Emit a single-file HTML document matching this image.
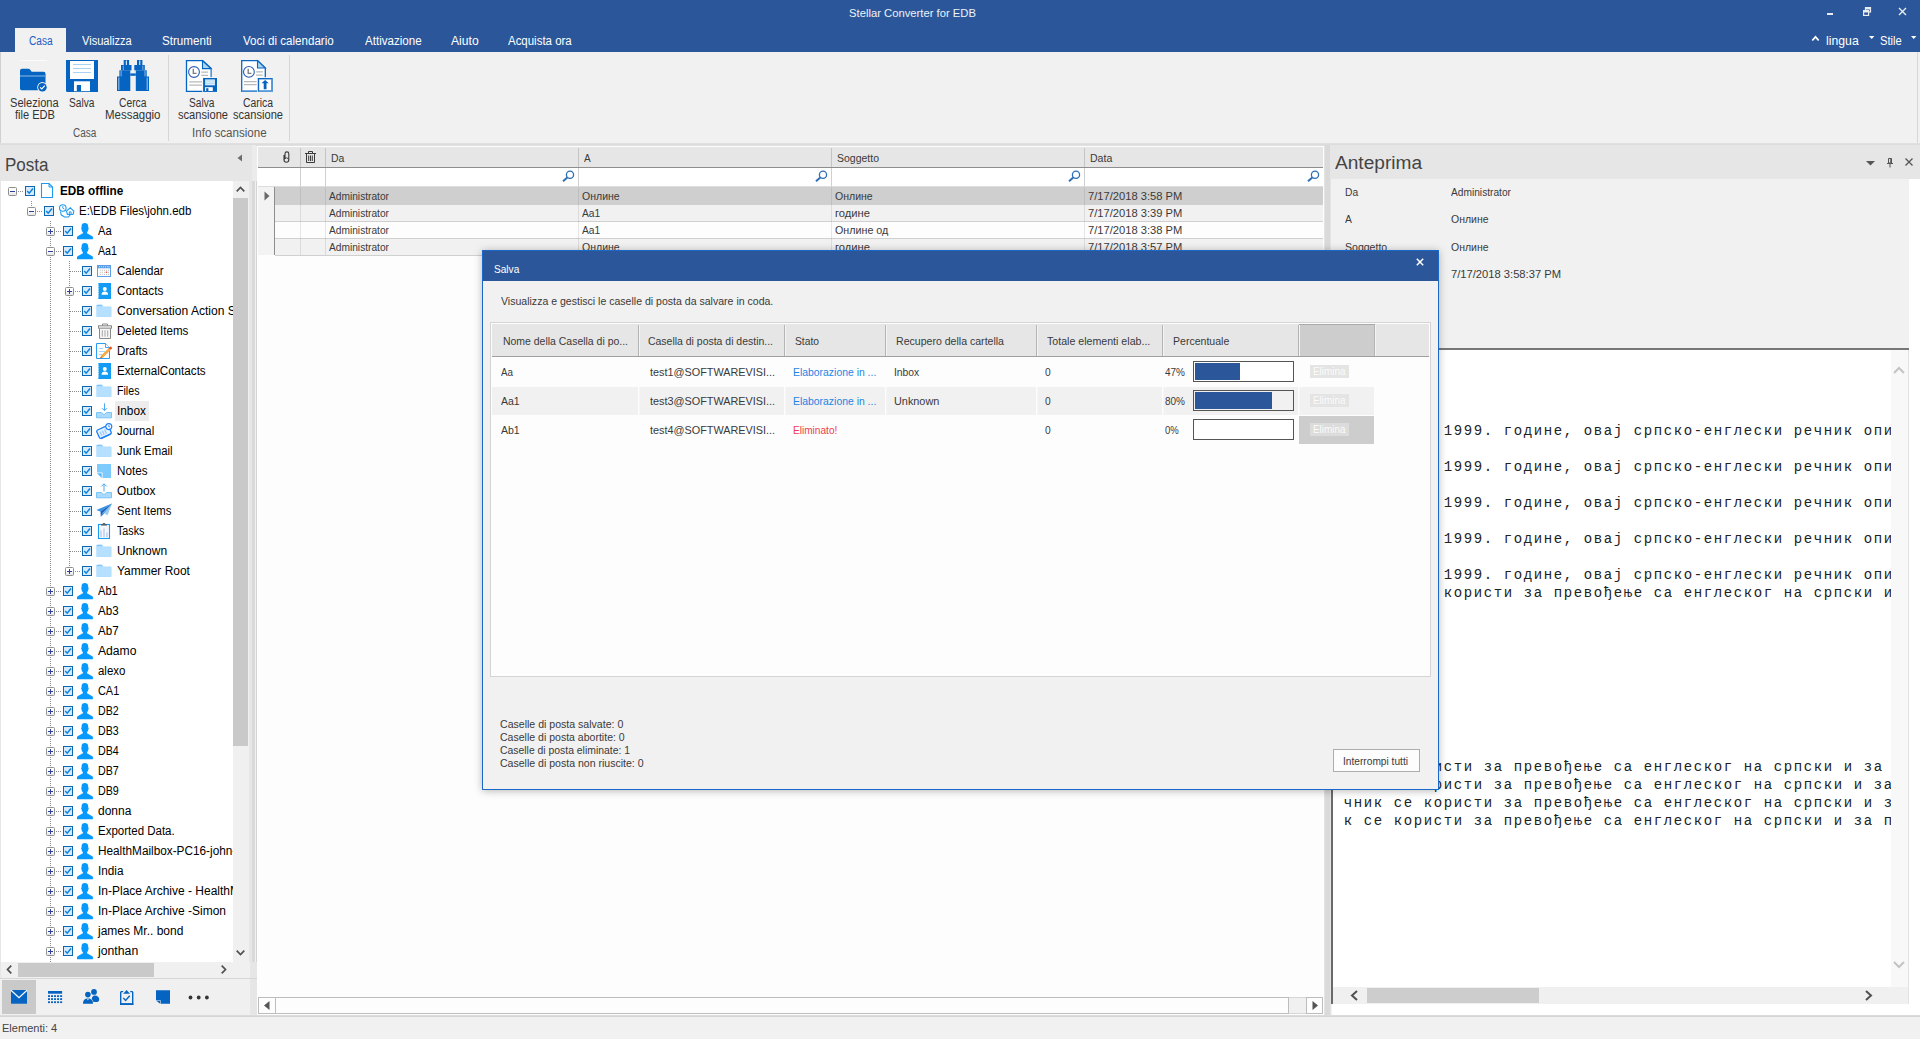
<!DOCTYPE html>
<html lang="it">
<head>
<meta charset="utf-8">
<title>Stellar Converter for EDB</title>
<style>
*{box-sizing:border-box;margin:0;padding:0}
html,body{width:1920px;height:1039px;overflow:hidden}
body{position:relative;background:#f1f1f1;font-family:"Liberation Sans",sans-serif;font-size:12px;color:#222;}
.a{position:absolute}
.t{position:absolute;white-space:nowrap;line-height:1}
.ui{font-family:"Liberation Sans","DejaVu Sans",sans-serif}
svg{position:absolute;overflow:visible}
/* title */
#title{left:0;top:0;width:1920px;height:52px;background:#2b579a}
.tab{color:#fff;font-size:12px;top:34.500px}
/* ribbon */
.rl{font-size:12px;color:#333;text-align:center;line-height:13px;white-space:nowrap}
.rg{font-size:12px;color:#555}
/* tree */
.tr{font-size:12px;color:#000}
.cb{position:absolute;width:10px;height:10px;border:1px solid #0c66b4;background:#d6ecfc}
.ex{position:absolute;width:9px;height:9px;border:1px solid #8f8f8f;border-radius:1.500px;background:linear-gradient(#fff 40%,#e4e4e4)}
.ex:before{content:"";position:absolute;left:1px;top:3px;width:5px;height:1px;background:#2b3f9c}
.ex.p:after{content:"";position:absolute;left:3px;top:1px;width:1px;height:5px;background:#2b3f9c}
.dh{position:absolute;height:1px;background-image:linear-gradient(90deg,#8c8c8c 50%,transparent 50%);background-size:2px 1px}
.dv{position:absolute;width:1px;background-image:linear-gradient(180deg,#8c8c8c 50%,transparent 50%);background-size:1px 2px}
/* grid */
.g{font-size:11px;color:#3a3a3a;transform-origin:0 0}
.d{font-size:11px;color:#3a3a3a;transform-origin:0 0}
.mono{font-family:"Liberation Mono",monospace;font-size:14px;letter-spacing:1.600px;color:#222;transform-origin:0 0}
</style>
</head>
<body>
<!-- TITLE BAR -->
<div id="title" class="a"></div>
<div class="t ui" style="transform-origin:0 0;transform:scaleX(0.9788);left:848.800px;top:8px;font-size:11.500px;color:#eef2f7" id="ttl">Stellar Converter for EDB</div>
<div class="a" style="left:15px;top:28px;width:51px;height:24px;background:#f1f1f1"></div>
<div class="t tab" style="transform-origin:0 0;transform:scaleX(0.8460);left:29px;color:#2160c4" id="tab0">Casa</div>
<div class="t tab" style="transform-origin:0 0;transform:scaleX(0.9236);left:82px" id="tab1">Visualizza</div>
<div class="t tab" style="transform-origin:0 0;transform:scaleX(0.9677);left:162px" id="tab2">Strumenti</div>
<div class="t tab" style="transform-origin:0 0;transform:scaleX(0.9643);left:243px" id="tab3">Voci di calendario</div>
<div class="t tab" style="transform-origin:0 0;transform:scaleX(0.9659);left:365px" id="tab4">Attivazione</div>
<div class="t tab" style="transform-origin:0 0;transform:scaleX(1.0125);left:451px" id="tab5">Aiuto</div>
<div class="t tab" style="transform-origin:0 0;transform:scaleX(0.9550);left:508px" id="tab6">Acquista ora</div>
<div class="t tab" style="transform-origin:0 0;transform:scaleX(1.0209);left:1826px" id="tab7">lingua</div>
<div class="t tab" style="transform-origin:0 0;transform:scaleX(0.9296);left:1880px" id="tab8">Stile</div>
<svg style="left:0;top:0" width="1920" height="52" viewBox="0 0 1920 52">
 <rect x="1827" y="13" width="6" height="2" fill="#e8ecf3"/>
 <g fill="none" stroke="#e8ecf3" stroke-width="1.2">
  <rect x="1865.5" y="7.6" width="5" height="4.4"/>
  <rect x="1863.6" y="10.6" width="5" height="4.8" fill="#2b579a"/>
  <path d="M1865.5 8.6h5M1863.6 11.6h5" stroke-width="1.6"/>
 </g>
 <path d="M1899 8l7 7M1906 8l-7 7" stroke="#e8ecf3" stroke-width="1.4" fill="none"/>
 <path d="M1812.3 40.5l3.2-3.6 3.2 3.6" stroke="#fff" stroke-width="1.8" fill="none"/>
 <path d="M1869 36h5.4l-2.7 3z" fill="#fff"/>
 <path d="M1911 36h5.4l-2.7 3z" fill="#fff"/>
</svg>
<!-- RIBBON -->
<div class="a" style="left:0;top:52px;width:1920px;height:92px;background:#f1f1f1"></div>
<div class="a" style="left:0;top:52px;width:1px;height:92px;background:#d0d0d0"></div>
<div class="a" style="left:1917px;top:52px;width:1px;height:92px;background:#d8d8d8"></div>
<div class="a" style="left:0;top:143px;width:1920px;height:2px;background:linear-gradient(#e2e2e2,#dadada)"></div>
<div class="a" style="left:168px;top:55px;width:1px;height:86px;background:#d6d6d6"></div>
<div class="a" style="left:289px;top:55px;width:1px;height:86px;background:#d6d6d6"></div>
<div class="t rl" id="rl0a" style="transform-origin:0 0;transform:scaleX(0.9238);left:10.0px;top:96.7px">Seleziona</div>
<div class="t rl" id="rl0b" style="transform-origin:0 0;transform:scaleX(0.9225);left:14.7px;top:109.2px">file EDB</div>
<div class="t rl" id="rl1a" style="transform-origin:0 0;transform:scaleX(0.8491);left:69.0px;top:96.7px">Salva</div>
<div class="t rl" id="rl2a" style="transform-origin:0 0;transform:scaleX(0.8590);left:119.0px;top:96.7px">Cerca</div>
<div class="t rl" id="rl2b" style="transform-origin:0 0;transform:scaleX(0.9564);left:105.0px;top:109.2px">Messaggio</div>
<div class="t rl" id="rl3a" style="transform-origin:0 0;transform:scaleX(0.8491);left:189.0px;top:96.7px">Salva</div>
<div class="t rl" id="rl3b" style="transform-origin:0 0;transform:scaleX(0.9251);left:177.5px;top:109.2px">scansione</div>
<div class="t rl" id="rl4a" style="transform-origin:0 0;transform:scaleX(0.8649);left:242.5px;top:96.7px">Carica</div>
<div class="t rl" id="rl4b" style="transform-origin:0 0;transform:scaleX(0.9251);left:232.5px;top:109.2px">scansione</div>
<div class="t rg" id="rg0" style="transform-origin:0 0;transform:scaleX(0.8317);left:73px;top:127.2px">Casa</div>
<div class="t rg" id="rg1" style="transform-origin:0 0;transform:scaleX(0.9652);left:192px;top:127.2px">Info scansione</div>
<!-- ribbon icons -->
<div class="a" style="left:20px;top:60px;width:27px;height:1px;background:#fafafa"></div>
<svg style="left:18px;top:60px" width="32" height="32" viewBox="0 0 32 32">
 <path d="M2 10.700q0-2 2-2h6.300q1.200 0 1.900 1l1.500 2.100H25.500q2 0 2 2V28.600q0 1.600-1.600 1.600H3.600Q2 30.200 2 28.600z" fill="#0563c1"/>
 <rect x="2" y="15.200" width="25.500" height="1.600" fill="#5b9bd9"/>
 <circle cx="24.400" cy="27.200" r="5.200" fill="#f1f1f1"/>
 <circle cx="24.400" cy="27.200" r="4.300" fill="#0563c1"/>
 <path d="M22.100 27.300l1.700 1.700 3-3.300" stroke="#fff" stroke-width="1.200" fill="none"/>
</svg>
<svg style="left:66px;top:60px" width="32" height="32" viewBox="0 0 32 32">
 <path d="M0 0h32v32H1.500Q0 32 0 30.500z" fill="#0563c1"/>
 <rect x="4" y="1" width="24" height="18" fill="#fff"/>
 <path d="M7 4.500h18M7 8.500h18M7 12.500h18" stroke="#a9d3f0" stroke-width="1"/>
 <rect x="8" y="21.300" width="16" height="9.900" fill="#fff"/>
 <rect x="10.800" y="25" width="4.200" height="6.200" fill="#0563c1"/>
</svg>
<svg style="left:117px;top:60px" width="32" height="32" viewBox="0 0 32 32" id="bino">
 <g fill="#0563c1">
  <rect x="6.700" y="0" width="5.400" height="5.500"/><rect x="20" y="0" width="5.400" height="5.500"/>
  <rect x="4" y="5" width="10.500" height="5.300"/><rect x="17.300" y="5" width="10.500" height="5.300"/>
  <path d="M2.400 10.200h10.900v20.800H0V16.400h2.400z"/>
  <path d="M18.800 10.200h10.900v6.200H32v14.600H18.800z"/>
  <rect x="13.300" y="13.400" width="5.500" height="2.400"/>
 </g>
 <g fill="#cfe2f5">
  <rect x="8.800" y="0.500" width="1.200" height="4.500"/><rect x="22.100" y="0.500" width="1.200" height="4.500"/>
 </g>
 <g fill="#8db9e6">
  <rect x="3.600" y="10.400" width="1" height="6"/><rect x="27.500" y="10.400" width="1" height="6"/>
  <rect x="1.200" y="17.500" width="1.200" height="12.500"/><rect x="29.600" y="17.500" width="1.200" height="12.500"/>
  <rect x="5.800" y="5.600" width=".9" height="4.400"/><rect x="25.400" y="5.600" width=".9" height="4.400"/>
 </g>
</svg>
<svg style="left:185px;top:60px" width="33" height="32" viewBox="0 0 33 32" id="savescan">
 <path d="M1.500 0.600h16.200l8.600 8v22.700H1.500z" fill="#fff" stroke="#0563c1" stroke-width="1.300"/>
 <path d="M17.500 0.800v7.800h8.500z" fill="#a9d6f3" stroke="#0563c1" stroke-width="1.100"/>
 <path d="M26.300 9v9" stroke="#5b9bd9" stroke-width="1.300"/>
 <circle cx="9" cy="12" r="5.400" fill="#fff" stroke="#2a5db0" stroke-width="1.100"/>
 <path d="M8.300 8.800v4.600h3.200" stroke="#7a7a7a" stroke-width="1.300" fill="none"/>
 <path d="M16.200 12.200h6.800M16.200 15.300h6.800M4.200 21.900h13M4.200 25.100h13" stroke="#b9b9b9" stroke-width="1.300"/>
 <rect x="17.300" y="17.200" width="15.700" height="14.800" fill="#f6f6f6"/>
 <rect x="18.100" y="18" width="13.900" height="13.900" fill="#0563c1"/>
 <rect x="20.100" y="19.400" width="9.900" height="5.900" fill="#dceefb"/>
 <path d="M20.100 21h9.900M20.100 23.300h9.900" stroke="#a9d3f0" stroke-width=".9"/>
 <rect x="20" y="27.200" width="7.800" height="3.800" fill="#fff"/>
 <rect x="21.200" y="28.200" width="2.200" height="2.800" fill="#0563c1"/>
</svg>
<svg style="left:240px;top:60px" width="34" height="32" viewBox="0 0 34 32" id="loadscan">
 <path d="M1.700 0.600h16l7.600 7.400v23.300H1.700z" fill="#fff" stroke="#0f67c3" stroke-width="1.300"/>
 <path d="M1.700 31h17" stroke="#5b9bd9" stroke-width="1.500"/>
 <path d="M17.500 0.800v7.200h7.800z" fill="#a9d6f3" stroke="#0f67c3" stroke-width="1.100"/>
 <circle cx="8.900" cy="11.900" r="5.400" fill="#fff" stroke="#2a5db0" stroke-width="1.100"/>
 <path d="M8.200 8.700v4.600h3.200" stroke="#7a7a7a" stroke-width="1.300" fill="none"/>
 <path d="M16.100 11.800h6.700M16.100 15.200h6.700M4 21.600h12.600M4 24.600h12.600" stroke="#b9b9b9" stroke-width="1.300"/>
 <rect x="17" y="17.200" width="16.500" height="14.800" fill="#f6f6f6"/>
 <rect x="18.500" y="18.700" width="13.600" height="12.500" fill="#fff" stroke="#0f67c3" stroke-width="1.400"/>
 <path d="M32.100 18.700v12.500H18.500" fill="none" stroke="#5b9bd9" stroke-width="1.400"/>
 <path d="M25.100 20l3.600 3.300h-2.200v6h-2.800v-6h-2.200z" fill="#0563c1"/>
</svg>
<!-- LEFT PANEL -->
<div class="a" style="left:0;top:145px;width:252px;height:871px;background:#e6e6e6"></div>
<div class="a" style="left:252px;top:145px;width:5px;height:36px;background:#ececec"></div>
<div class="a" style="left:252px;top:181px;width:3px;height:835px;background:#d9d9d9"></div>
<div class="a" style="left:256px;top:181px;width:1px;height:835px;background:#d4d4d4"></div>
<div class="t ui" style="transform-origin:0 0;transform:scaleX(0.9450);left:5px;top:156px;font-size:18px;color:#444;transform-origin:0 0" id="posta">Posta</div>
<svg style="left:237px;top:154px" width="6" height="8" viewBox="0 0 6 8"><path d="M5 0.500v7l-4.500-3.500z" fill="#6d6d6d"/></svg>
<div class="a" id="tree" style="left:1px;top:181px;width:232px;height:781px;background:#fff;overflow:hidden">
<div class="dv" style="left:30px;top:20px;height:8px"></div>
<div class="dv" style="left:49px;top:40px;height:741px"></div>
<div class="dv" style="left:68px;top:80px;height:308px"></div>
<div class="ex" style="left:7px;top:6px"></div>
<div class="dh" style="left:17px;top:10px;width:6px"></div>
<div class="cb" style="left:24px;top:5px"><svg style="left:0;top:0" width="8" height="8" viewBox="0 0 8 8"><path d="M1.200 4l2 2.200 3.800-4.600" fill="none" stroke="#1080dc" stroke-width="1.500"/></svg></div>
<svg style="left:38px;top:2px" width="16" height="16" viewBox="0 0 16 16"><path d="M2.500 0.500h7.500l3.500 3.500v10.500h-11z" fill="#fff" stroke="#1e9bf0" stroke-width="1.100"/><path d="M10 0.500v3.500h3.500" fill="none" stroke="#1e9bf0" stroke-width="1"/></svg>
<div class="t tr" id="tr0" style="transform-origin:0 0;transform:scaleX(0.9788);left:59px;top:4px;font-weight:bold;">EDB offline</div>
<div class="ex" style="left:26px;top:26px"></div>
<div class="dh" style="left:36px;top:30px;width:6px"></div>
<div class="cb" style="left:43px;top:25px"><svg style="left:0;top:0" width="8" height="8" viewBox="0 0 8 8"><path d="M1.200 4l2 2.200 3.800-4.600" fill="none" stroke="#1080dc" stroke-width="1.500"/></svg></div>
<svg style="left:57px;top:22px" width="16" height="16" viewBox="0 0 16 16"><g fill="none" stroke="#1e9bf0" stroke-width="1.100"><circle cx="4.800" cy="5" r="3.300"/><path d="M4.800 3v2.200l1.600.8" stroke-width=".9"/><path d="M2.500 8.500l.7 3.300 3.300 2.200h4l2-2.500"/><path d="M8.500 8.200l3.700-3.400 3.700 3.400-.9 3.300h-5.600z"/><path d="M11.300 11.500v-2.600h1.800v2.600" stroke-width="1"/></g></svg>
<div class="t tr" id="tr1" style="transform-origin:0 0;transform:scaleX(0.9565);left:78px;top:24px;">E:\EDB Files\john.edb</div>
<div class="ex p" style="left:45px;top:46px"></div>
<div class="dh" style="left:55px;top:50px;width:6px"></div>
<div class="cb" style="left:62px;top:45px"><svg style="left:0;top:0" width="8" height="8" viewBox="0 0 8 8"><path d="M1.200 4l2 2.200 3.800-4.600" fill="none" stroke="#1080dc" stroke-width="1.500"/></svg></div>
<svg style="left:76px;top:42px" width="16" height="17" viewBox="0 0 16 17"><path d="M7.700 0C9.600 0 11.200 1.200 11.200 3.200L11.200 4.600C11.800 4.800 11.900 5.600 11.400 6.200C11.200 7.400 10.600 8.600 10 9.300L10 10.200L15.300 13.300C15.800 13.600 15.900 14 15.900 14.500L15.900 16.300L0 16.300L0 14.500C0 14 .2 13.600 .6 13.300L5.900 10.200L5.900 9.300C5.200 8.600 4.700 7.400 4.500 6.200C4 5.600 4.100 4.800 4.600 4.600L4.600 3.200C4.600 1.200 5.800 0 7.700 0Z" fill="#0899fd"/></svg>
<div class="t tr" id="tr2" style="transform-origin:0 0;transform:scaleX(0.9328);left:97px;top:44px;">Aa</div>
<div class="ex" style="left:45px;top:66px"></div>
<div class="dh" style="left:55px;top:70px;width:6px"></div>
<div class="cb" style="left:62px;top:65px"><svg style="left:0;top:0" width="8" height="8" viewBox="0 0 8 8"><path d="M1.200 4l2 2.200 3.800-4.600" fill="none" stroke="#1080dc" stroke-width="1.500"/></svg></div>
<svg style="left:76px;top:62px" width="16" height="17" viewBox="0 0 16 17"><path d="M7.700 0C9.600 0 11.200 1.200 11.200 3.200L11.200 4.600C11.800 4.800 11.900 5.600 11.400 6.200C11.200 7.400 10.600 8.600 10 9.300L10 10.200L15.300 13.300C15.800 13.600 15.900 14 15.900 14.500L15.900 16.300L0 16.300L0 14.500C0 14 .2 13.600 .6 13.300L5.900 10.200L5.900 9.300C5.200 8.600 4.700 7.400 4.500 6.200C4 5.600 4.100 4.800 4.600 4.600L4.600 3.200C4.600 1.200 5.800 0 7.700 0Z" fill="#0899fd"/></svg>
<div class="t tr" id="tr3" style="transform-origin:0 0;transform:scaleX(0.8895);left:97px;top:64px;">Aa1</div>
<div class="dh" style="left:69px;top:90px;width:11px"></div>
<div class="cb" style="left:81px;top:85px"><svg style="left:0;top:0" width="8" height="8" viewBox="0 0 8 8"><path d="M1.200 4l2 2.200 3.800-4.600" fill="none" stroke="#1080dc" stroke-width="1.500"/></svg></div>
<svg style="left:95px;top:82px" width="16" height="16" viewBox="0 0 16 16"><rect x="1.500" y="2.500" width="13" height="11" fill="#fff" stroke="#5c9fe8" stroke-width="1"/><rect x="1" y="2" width="14" height="3.300" fill="#5c9fe8"/><path d="M3.500 3v1.300M5.500 3v1.300M7.500 3v1.300M9.500 3v1.300M11.500 3v1.300M13 3v1.300" stroke="#d4e6fa" stroke-width=".7"/><g fill="#b9b9b9"><rect x="3.8" y="6.7" width="1" height="1"/><rect x="5.8" y="6.7" width="1" height="1"/><rect x="7.9" y="6.7" width="1" height="1"/><rect x="9.9" y="6.7" width="1" height="1"/><rect x="12.0" y="6.7" width="1" height="1"/><rect x="3.8" y="8.8" width="1" height="1"/><rect x="5.8" y="8.8" width="1" height="1"/><rect x="7.9" y="8.8" width="1" height="1"/><rect x="12.0" y="8.8" width="1" height="1"/><rect x="3.8" y="10.9" width="1" height="1"/><rect x="5.8" y="10.9" width="1" height="1"/><rect x="7.9" y="10.9" width="1" height="1"/><rect x="9.9" y="10.9" width="1" height="1"/><rect x="12.0" y="10.9" width="1" height="1"/></g><rect x="9.800" y="8.600" width="1.300" height="1.300" fill="#f03030"/></svg>
<div class="t tr" id="tr4" style="transform-origin:0 0;transform:scaleX(0.9589);left:116px;top:84px;">Calendar</div>
<div class="ex p" style="left:64px;top:106px"></div>
<div class="dh" style="left:74px;top:110px;width:6px"></div>
<div class="cb" style="left:81px;top:105px"><svg style="left:0;top:0" width="8" height="8" viewBox="0 0 8 8"><path d="M1.200 4l2 2.200 3.800-4.600" fill="none" stroke="#1080dc" stroke-width="1.500"/></svg></div>
<svg style="left:95px;top:102px" width="16" height="16" viewBox="0 0 16 16"><rect x="2.300" y="0" width="12.700" height="16" fill="#149cf5"/><path d="M2.300 1.500v13" stroke="#fff" stroke-width=".9" stroke-dasharray="0.800 0.900"/><circle cx="8.800" cy="5.900" r="2" fill="#fff"/><path d="M5.500 11.800c0-2.300 1.400-3.300 3.300-3.300s3.300 1 3.300 3.300z" fill="#fff"/></svg>
<div class="t tr" id="tr5" style="transform-origin:0 0;transform:scaleX(0.9776);left:116px;top:104px;">Contacts</div>
<div class="dh" style="left:69px;top:130px;width:11px"></div>
<div class="cb" style="left:81px;top:125px"><svg style="left:0;top:0" width="8" height="8" viewBox="0 0 8 8"><path d="M1.200 4l2 2.200 3.800-4.600" fill="none" stroke="#1080dc" stroke-width="1.500"/></svg></div>
<svg style="left:95px;top:122px" width="16" height="16" viewBox="0 0 16 16"><path d="M0.300 2.900q0-.9.900-.9h4.600q.6 0 .9.500l.7 1.100h7.300q.7 0 .7.700v9q0 .7-.7.700H1q-.7 0-.7-.7z" fill="#aedcff"/><path d="M.5 2.500q0-.7.800-.7h4.400q.6 0 .9.700z" fill="#4db1fb"/><path d="M1 4.300h14.200v9.200H1z" fill="#b6e0ff"/></svg>
<div class="t tr" id="tr6" style="transform-origin:0 0;transform:scaleX(1.0070);left:116px;top:124px;">Conversation Action Settings</div>
<div class="dh" style="left:69px;top:150px;width:11px"></div>
<div class="cb" style="left:81px;top:145px"><svg style="left:0;top:0" width="8" height="8" viewBox="0 0 8 8"><path d="M1.200 4l2 2.200 3.800-4.600" fill="none" stroke="#1080dc" stroke-width="1.500"/></svg></div>
<svg style="left:95px;top:142px" width="16" height="16" viewBox="0 0 16 16"><g fill="none" stroke="#8a8a8a" stroke-width="1"><path d="M3.500 5.300v10.200h11V5.300" fill="#f6f6f6"/><rect x="2.500" y="2.800" width="13" height="2.400" fill="#f0f0f0"/><path d="M6.500 2.800v-1.800h5v1.800"/><path d="M6.300 7.300v6.400M9 7.300v6.400M11.700 7.300v6.400" stroke="#a8a8a8"/></g></svg>
<div class="t tr" id="tr7" style="transform-origin:0 0;transform:scaleX(0.9629);left:116px;top:144px;">Deleted Items</div>
<div class="dh" style="left:69px;top:170px;width:11px"></div>
<div class="cb" style="left:81px;top:165px"><svg style="left:0;top:0" width="8" height="8" viewBox="0 0 8 8"><path d="M1.200 4l2 2.200 3.800-4.600" fill="none" stroke="#1080dc" stroke-width="1.500"/></svg></div>
<svg style="left:95px;top:162px" width="16" height="16" viewBox="0 0 16 16"><path d="M0.500 0.500h9l4 4v11h-13z" fill="#fff" stroke="#2a9df4" stroke-width="1"/><path d="M9.500 .5v4h4" fill="#fff" stroke="#2a9df4" stroke-width=".9"/><path d="M3 5.500h4M3 8.500h6M3 11.500h3" stroke="#a9d4f6" stroke-width="1"/><path d="M4.300 15.300l.9-2.800 7.600-7.600 1.900 1.900-7.600 7.600z" fill="#f5a033"/><path d="M5.800 12.300l7.200-7.200M6.800 13.300l7.200-7.200" stroke="#f8c27a" stroke-width=".6"/><path d="M12.800 4.900l1.200-1.200q.5-.4 1 0l.9.900q.4.500 0 1l-1.200 1.200z" fill="#f0501e"/><path d="M4.300 15.300l.5-1.500 1 1z" fill="#c0392b"/></svg>
<div class="t tr" id="tr8" style="transform-origin:0 0;transform:scaleX(0.9527);left:116px;top:164px;">Drafts</div>
<div class="dh" style="left:69px;top:190px;width:11px"></div>
<div class="cb" style="left:81px;top:185px"><svg style="left:0;top:0" width="8" height="8" viewBox="0 0 8 8"><path d="M1.200 4l2 2.200 3.800-4.600" fill="none" stroke="#1080dc" stroke-width="1.500"/></svg></div>
<svg style="left:95px;top:182px" width="16" height="16" viewBox="0 0 16 16"><rect x="2.300" y="0" width="12.700" height="16" fill="#149cf5"/><path d="M2.300 1.500v13" stroke="#fff" stroke-width=".9" stroke-dasharray="0.800 0.900"/><circle cx="8.800" cy="5.900" r="2" fill="#fff"/><path d="M5.500 11.800c0-2.300 1.400-3.300 3.300-3.300s3.300 1 3.300 3.300z" fill="#fff"/></svg>
<div class="t tr" id="tr9" style="transform-origin:0 0;transform:scaleX(0.9706);left:116px;top:184px;">ExternalContacts</div>
<div class="dh" style="left:69px;top:210px;width:11px"></div>
<div class="cb" style="left:81px;top:205px"><svg style="left:0;top:0" width="8" height="8" viewBox="0 0 8 8"><path d="M1.200 4l2 2.200 3.800-4.600" fill="none" stroke="#1080dc" stroke-width="1.500"/></svg></div>
<svg style="left:95px;top:202px" width="16" height="16" viewBox="0 0 16 16"><path d="M0.300 2.900q0-.9.900-.9h4.600q.6 0 .9.500l.7 1.100h7.300q.7 0 .7.700v9q0 .7-.7.700H1q-.7 0-.7-.7z" fill="#aedcff"/><path d="M.5 2.500q0-.7.800-.7h4.400q.6 0 .9.700z" fill="#4db1fb"/><path d="M1 4.300h14.200v9.200H1z" fill="#b6e0ff"/></svg>
<div class="t tr" id="tr10" style="transform-origin:0 0;transform:scaleX(0.8878);left:116px;top:204px;">Files</div>
<div class="dh" style="left:69px;top:230px;width:11px"></div>
<div class="cb" style="left:81px;top:225px"><svg style="left:0;top:0" width="8" height="8" viewBox="0 0 8 8"><path d="M1.200 4l2 2.200 3.800-4.600" fill="none" stroke="#1080dc" stroke-width="1.500"/></svg></div>
<svg style="left:95px;top:222px" width="16" height="16" viewBox="0 0 16 16"><path d="M0.500 9.500h5l2.500 2.200 2.500-2.200h5v5.300h-15z" fill="#aadafb" stroke="#79c4f8" stroke-width="1"/><path d="M8.500 0.300v7.300M6 5.200l2.500 2.500 2.500-2.500" fill="none" stroke="#4aa8f0" stroke-width="1"/></svg>
<div class="a" style="left:114px;top:220px;width:34px;height:20px;background:#ededed"></div>
<div class="t tr" id="tr11" style="transform-origin:0 0;transform:scaleX(0.9844);left:116px;top:224px;">Inbox</div>
<div class="dh" style="left:69px;top:250px;width:11px"></div>
<div class="cb" style="left:81px;top:245px"><svg style="left:0;top:0" width="8" height="8" viewBox="0 0 8 8"><path d="M1.200 4l2 2.200 3.800-4.600" fill="none" stroke="#1080dc" stroke-width="1.500"/></svg></div>
<svg style="left:95px;top:242px" width="17" height="16" viewBox="0 0 17 16"><g transform="rotate(-25 8 9)"><rect x="1.500" y="4.500" width="13" height="9" rx="1.500" fill="#e6f2fe" stroke="#1a7ffa" stroke-width="1.300"/><path d="M4.500 7v4.500M7 7v4.500M9.500 7v4.500" stroke="#9ccaf8" stroke-width="1.300"/><path d="M2.500 13.700h11" stroke="#1a7ffa" stroke-width="1.300"/></g><circle cx="12.800" cy="3.600" r="3" fill="#fff" stroke="#1a7ffa" stroke-width="1.100"/><path d="M12.800 2v1.800h1.300" stroke="#1a7ffa" stroke-width=".8" fill="none"/></svg>
<div class="t tr" id="tr12" style="transform-origin:0 0;transform:scaleX(0.9451);left:116px;top:244px;">Journal</div>
<div class="dh" style="left:69px;top:270px;width:11px"></div>
<div class="cb" style="left:81px;top:265px"><svg style="left:0;top:0" width="8" height="8" viewBox="0 0 8 8"><path d="M1.200 4l2 2.200 3.800-4.600" fill="none" stroke="#1080dc" stroke-width="1.500"/></svg></div>
<svg style="left:95px;top:262px" width="16" height="16" viewBox="0 0 16 16"><path d="M0.300 2.900q0-.9.900-.9h4.600q.6 0 .9.500l.7 1.100h7.300q.7 0 .7.700v9q0 .7-.7.700H1q-.7 0-.7-.7z" fill="#aedcff"/><path d="M.5 2.500q0-.7.800-.7h4.400q.6 0 .9.700z" fill="#4db1fb"/><path d="M1 4.300h14.200v9.200H1z" fill="#b6e0ff"/></svg>
<div class="t tr" id="tr13" style="transform-origin:0 0;transform:scaleX(0.9457);left:116px;top:264px;">Junk Email</div>
<div class="dh" style="left:69px;top:290px;width:11px"></div>
<div class="cb" style="left:81px;top:285px"><svg style="left:0;top:0" width="8" height="8" viewBox="0 0 8 8"><path d="M1.200 4l2 2.200 3.800-4.600" fill="none" stroke="#1080dc" stroke-width="1.500"/></svg></div>
<svg style="left:95px;top:282px" width="16" height="16" viewBox="0 0 16 16"><path d="M1 1h14v14h-8.500v-5.500h-5.500z" fill="#7dcafd"/><path d="M1 10.300h4.700v4.700z" fill="#5ab8fa"/></svg>
<div class="t tr" id="tr14" style="transform-origin:0 0;transform:scaleX(0.9726);left:116px;top:284px;">Notes</div>
<div class="dh" style="left:69px;top:310px;width:11px"></div>
<div class="cb" style="left:81px;top:305px"><svg style="left:0;top:0" width="8" height="8" viewBox="0 0 8 8"><path d="M1.200 4l2 2.200 3.800-4.600" fill="none" stroke="#1080dc" stroke-width="1.500"/></svg></div>
<svg style="left:95px;top:302px" width="16" height="16" viewBox="0 0 16 16"><path d="M0.500 9.500h5l2.500 2.200 2.500-2.200h5v5.300h-15z" fill="#aadafb" stroke="#79c4f8" stroke-width="1"/><path d="M8 8.500v-7.600M5.500 3.300l2.500-2.500 2.500 2.500" fill="none" stroke="#4aa8f0" stroke-width="1"/></svg>
<div class="t tr" id="tr15" style="transform-origin:0 0;transform:scaleX(0.9948);left:116px;top:304px;">Outbox</div>
<div class="dh" style="left:69px;top:330px;width:11px"></div>
<div class="cb" style="left:81px;top:325px"><svg style="left:0;top:0" width="8" height="8" viewBox="0 0 8 8"><path d="M1.200 4l2 2.200 3.800-4.600" fill="none" stroke="#1080dc" stroke-width="1.500"/></svg></div>
<svg style="left:95px;top:322px" width="16" height="16" viewBox="0 0 16 16"><path d="M0.500 7l15.500-6.500-4.500 12-3.200-2.200z" fill="#9dccf2"/><path d="M16 .5l-11.500 8 .3 5.500 1.700-4z" fill="#1a5fb4"/><path d="M16 .5l-9.500 9.500 1.800.3z" fill="#5aa7ea"/><path d="M.5 7l15.500-6.500-11.500 8z" fill="#3d94e4"/><path d="M4.800 14l3.500-3.700-1.800-.3z" fill="#2f7fd4"/></svg>
<div class="t tr" id="tr16" style="transform-origin:0 0;transform:scaleX(0.9484);left:116px;top:324px;">Sent Items</div>
<div class="dh" style="left:69px;top:350px;width:11px"></div>
<div class="cb" style="left:81px;top:345px"><svg style="left:0;top:0" width="8" height="8" viewBox="0 0 8 8"><path d="M1.200 4l2 2.200 3.800-4.600" fill="none" stroke="#1080dc" stroke-width="1.500"/></svg></div>
<svg style="left:95px;top:342px" width="16" height="16" viewBox="0 0 16 16"><rect x="2.500" y="1.500" width="11" height="14" fill="#f4f8fe" stroke="#1a9cf2" stroke-width="1.100"/><path d="M5.300 1.800l2.700-2 2.700 2z" fill="#555"/><rect x="5" y="1.500" width="6" height="1" fill="#555"/><path d="M5 14v-6.500M8 14v-8.500M11 14v-4.500" stroke="#c3d4f5" stroke-width="1.700"/></svg>
<div class="t tr" id="tr17" style="transform-origin:0 0;transform:scaleX(0.8929);left:116px;top:344px;">Tasks</div>
<div class="dh" style="left:69px;top:370px;width:11px"></div>
<div class="cb" style="left:81px;top:365px"><svg style="left:0;top:0" width="8" height="8" viewBox="0 0 8 8"><path d="M1.200 4l2 2.200 3.800-4.600" fill="none" stroke="#1080dc" stroke-width="1.500"/></svg></div>
<svg style="left:95px;top:362px" width="16" height="16" viewBox="0 0 16 16"><path d="M0.300 2.900q0-.9.900-.9h4.600q.6 0 .9.500l.7 1.100h7.300q.7 0 .7.700v9q0 .7-.7.700H1q-.7 0-.7-.7z" fill="#aedcff"/><path d="M.5 2.500q0-.7.800-.7h4.400q.6 0 .9.700z" fill="#4db1fb"/><path d="M1 4.300h14.200v9.200H1z" fill="#b6e0ff"/></svg>
<div class="t tr" id="tr18" style="transform-origin:0 0;transform:scaleX(1.0014);left:116px;top:364px;">Unknown</div>
<div class="ex p" style="left:64px;top:386px"></div>
<div class="dh" style="left:74px;top:390px;width:6px"></div>
<div class="cb" style="left:81px;top:385px"><svg style="left:0;top:0" width="8" height="8" viewBox="0 0 8 8"><path d="M1.200 4l2 2.200 3.800-4.600" fill="none" stroke="#1080dc" stroke-width="1.500"/></svg></div>
<svg style="left:95px;top:382px" width="16" height="16" viewBox="0 0 16 16"><path d="M0.300 2.900q0-.9.900-.9h4.600q.6 0 .9.500l.7 1.100h7.300q.7 0 .7.700v9q0 .7-.7.700H1q-.7 0-.7-.7z" fill="#aedcff"/><path d="M.5 2.500q0-.7.800-.7h4.400q.6 0 .9.700z" fill="#4db1fb"/><path d="M1 4.300h14.200v9.200H1z" fill="#b6e0ff"/></svg>
<div class="t tr" id="tr19" style="transform-origin:0 0;transform:scaleX(0.9967);left:116px;top:384px;">Yammer Root</div>
<div class="ex p" style="left:45px;top:406px"></div>
<div class="dh" style="left:55px;top:410px;width:6px"></div>
<div class="cb" style="left:62px;top:405px"><svg style="left:0;top:0" width="8" height="8" viewBox="0 0 8 8"><path d="M1.200 4l2 2.200 3.800-4.600" fill="none" stroke="#1080dc" stroke-width="1.500"/></svg></div>
<svg style="left:76px;top:402px" width="16" height="17" viewBox="0 0 16 17"><path d="M7.700 0C9.600 0 11.200 1.200 11.200 3.200L11.200 4.600C11.800 4.800 11.900 5.600 11.400 6.200C11.200 7.400 10.600 8.600 10 9.300L10 10.200L15.300 13.300C15.800 13.600 15.900 14 15.900 14.500L15.900 16.300L0 16.300L0 14.500C0 14 .2 13.600 .6 13.300L5.900 10.200L5.900 9.300C5.200 8.600 4.700 7.400 4.500 6.200C4 5.600 4.100 4.800 4.600 4.600L4.600 3.200C4.600 1.200 5.800 0 7.700 0Z" fill="#0899fd"/></svg>
<div class="t tr" id="tr20" style="transform-origin:0 0;transform:scaleX(0.9270);left:97px;top:404px;">Ab1</div>
<div class="ex p" style="left:45px;top:426px"></div>
<div class="dh" style="left:55px;top:430px;width:6px"></div>
<div class="cb" style="left:62px;top:425px"><svg style="left:0;top:0" width="8" height="8" viewBox="0 0 8 8"><path d="M1.200 4l2 2.200 3.800-4.600" fill="none" stroke="#1080dc" stroke-width="1.500"/></svg></div>
<svg style="left:76px;top:422px" width="16" height="17" viewBox="0 0 16 17"><path d="M7.700 0C9.600 0 11.200 1.200 11.200 3.200L11.200 4.600C11.800 4.800 11.900 5.600 11.400 6.200C11.200 7.400 10.600 8.600 10 9.300L10 10.200L15.300 13.300C15.800 13.600 15.900 14 15.900 14.500L15.900 16.300L0 16.300L0 14.500C0 14 .2 13.600 .6 13.300L5.900 10.200L5.900 9.300C5.200 8.600 4.700 7.400 4.500 6.200C4 5.600 4.100 4.800 4.600 4.600L4.600 3.200C4.600 1.200 5.800 0 7.700 0Z" fill="#0899fd"/></svg>
<div class="t tr" id="tr21" style="transform-origin:0 0;transform:scaleX(0.9644);left:97px;top:424px;">Ab3</div>
<div class="ex p" style="left:45px;top:446px"></div>
<div class="dh" style="left:55px;top:450px;width:6px"></div>
<div class="cb" style="left:62px;top:445px"><svg style="left:0;top:0" width="8" height="8" viewBox="0 0 8 8"><path d="M1.200 4l2 2.200 3.800-4.600" fill="none" stroke="#1080dc" stroke-width="1.500"/></svg></div>
<svg style="left:76px;top:442px" width="16" height="17" viewBox="0 0 16 17"><path d="M7.700 0C9.600 0 11.200 1.200 11.200 3.200L11.200 4.600C11.800 4.800 11.900 5.600 11.400 6.200C11.200 7.400 10.600 8.600 10 9.300L10 10.200L15.300 13.300C15.800 13.600 15.900 14 15.900 14.500L15.900 16.300L0 16.300L0 14.500C0 14 .2 13.600 .6 13.300L5.900 10.200L5.900 9.300C5.200 8.600 4.700 7.400 4.500 6.200C4 5.600 4.100 4.800 4.600 4.600L4.600 3.200C4.600 1.200 5.800 0 7.700 0Z" fill="#0899fd"/></svg>
<div class="t tr" id="tr22" style="transform-origin:0 0;transform:scaleX(0.9644);left:97px;top:444px;">Ab7</div>
<div class="ex p" style="left:45px;top:466px"></div>
<div class="dh" style="left:55px;top:470px;width:6px"></div>
<div class="cb" style="left:62px;top:465px"><svg style="left:0;top:0" width="8" height="8" viewBox="0 0 8 8"><path d="M1.200 4l2 2.200 3.800-4.600" fill="none" stroke="#1080dc" stroke-width="1.500"/></svg></div>
<svg style="left:76px;top:462px" width="16" height="17" viewBox="0 0 16 17"><path d="M7.700 0C9.600 0 11.200 1.200 11.200 3.200L11.200 4.600C11.800 4.800 11.900 5.600 11.400 6.200C11.200 7.400 10.600 8.600 10 9.300L10 10.200L15.300 13.300C15.800 13.600 15.900 14 15.900 14.500L15.900 16.300L0 16.300L0 14.500C0 14 .2 13.600 .6 13.300L5.900 10.200L5.900 9.300C5.200 8.600 4.700 7.400 4.500 6.200C4 5.600 4.100 4.800 4.600 4.600L4.600 3.200C4.600 1.200 5.800 0 7.700 0Z" fill="#0899fd"/></svg>
<div class="t tr" id="tr23" style="transform-origin:0 0;transform:scaleX(1.0123);left:97px;top:464px;">Adamo</div>
<div class="ex p" style="left:45px;top:486px"></div>
<div class="dh" style="left:55px;top:490px;width:6px"></div>
<div class="cb" style="left:62px;top:485px"><svg style="left:0;top:0" width="8" height="8" viewBox="0 0 8 8"><path d="M1.200 4l2 2.200 3.800-4.600" fill="none" stroke="#1080dc" stroke-width="1.500"/></svg></div>
<svg style="left:76px;top:482px" width="16" height="17" viewBox="0 0 16 17"><path d="M7.700 0C9.600 0 11.200 1.200 11.200 3.200L11.200 4.600C11.800 4.800 11.900 5.600 11.400 6.200C11.200 7.400 10.600 8.600 10 9.300L10 10.200L15.300 13.300C15.800 13.600 15.900 14 15.900 14.500L15.900 16.300L0 16.300L0 14.500C0 14 .2 13.600 .6 13.300L5.900 10.200L5.900 9.300C5.200 8.600 4.700 7.400 4.500 6.200C4 5.600 4.100 4.800 4.600 4.600L4.600 3.200C4.600 1.200 5.800 0 7.700 0Z" fill="#0899fd"/></svg>
<div class="t tr" id="tr24" style="transform-origin:0 0;transform:scaleX(0.9551);left:97px;top:484px;">alexo</div>
<div class="ex p" style="left:45px;top:506px"></div>
<div class="dh" style="left:55px;top:510px;width:6px"></div>
<div class="cb" style="left:62px;top:505px"><svg style="left:0;top:0" width="8" height="8" viewBox="0 0 8 8"><path d="M1.200 4l2 2.200 3.800-4.600" fill="none" stroke="#1080dc" stroke-width="1.500"/></svg></div>
<svg style="left:76px;top:502px" width="16" height="17" viewBox="0 0 16 17"><path d="M7.700 0C9.600 0 11.200 1.200 11.200 3.200L11.200 4.600C11.800 4.800 11.900 5.600 11.400 6.200C11.200 7.400 10.600 8.600 10 9.300L10 10.200L15.300 13.300C15.800 13.600 15.900 14 15.900 14.500L15.900 16.300L0 16.300L0 14.500C0 14 .2 13.600 .6 13.300L5.900 10.200L5.900 9.300C5.200 8.600 4.700 7.400 4.500 6.200C4 5.600 4.100 4.800 4.600 4.600L4.600 3.200C4.600 1.200 5.800 0 7.700 0Z" fill="#0899fd"/></svg>
<div class="t tr" id="tr25" style="transform-origin:0 0;transform:scaleX(0.9082);left:97px;top:504px;">CA1</div>
<div class="ex p" style="left:45px;top:526px"></div>
<div class="dh" style="left:55px;top:530px;width:6px"></div>
<div class="cb" style="left:62px;top:525px"><svg style="left:0;top:0" width="8" height="8" viewBox="0 0 8 8"><path d="M1.200 4l2 2.200 3.800-4.600" fill="none" stroke="#1080dc" stroke-width="1.500"/></svg></div>
<svg style="left:76px;top:522px" width="16" height="17" viewBox="0 0 16 17"><path d="M7.700 0C9.600 0 11.200 1.200 11.200 3.200L11.200 4.600C11.800 4.800 11.900 5.600 11.400 6.200C11.200 7.400 10.600 8.600 10 9.300L10 10.200L15.300 13.300C15.800 13.600 15.900 14 15.900 14.500L15.900 16.300L0 16.300L0 14.500C0 14 .2 13.600 .6 13.300L5.900 10.200L5.900 9.300C5.200 8.600 4.700 7.400 4.500 6.200C4 5.600 4.100 4.800 4.600 4.600L4.600 3.200C4.600 1.200 5.800 0 7.700 0Z" fill="#0899fd"/></svg>
<div class="t tr" id="tr26" style="transform-origin:0 0;transform:scaleX(0.8825);left:97px;top:524px;">DB2</div>
<div class="ex p" style="left:45px;top:546px"></div>
<div class="dh" style="left:55px;top:550px;width:6px"></div>
<div class="cb" style="left:62px;top:545px"><svg style="left:0;top:0" width="8" height="8" viewBox="0 0 8 8"><path d="M1.200 4l2 2.200 3.800-4.600" fill="none" stroke="#1080dc" stroke-width="1.500"/></svg></div>
<svg style="left:76px;top:542px" width="16" height="17" viewBox="0 0 16 17"><path d="M7.700 0C9.600 0 11.200 1.200 11.200 3.200L11.200 4.600C11.800 4.800 11.900 5.600 11.400 6.200C11.200 7.400 10.600 8.600 10 9.300L10 10.200L15.300 13.300C15.800 13.600 15.900 14 15.900 14.500L15.900 16.300L0 16.300L0 14.500C0 14 .2 13.600 .6 13.300L5.900 10.200L5.900 9.300C5.200 8.600 4.700 7.400 4.500 6.200C4 5.600 4.100 4.800 4.600 4.600L4.600 3.200C4.600 1.200 5.800 0 7.700 0Z" fill="#0899fd"/></svg>
<div class="t tr" id="tr27" style="transform-origin:0 0;transform:scaleX(0.8825);left:97px;top:544px;">DB3</div>
<div class="ex p" style="left:45px;top:566px"></div>
<div class="dh" style="left:55px;top:570px;width:6px"></div>
<div class="cb" style="left:62px;top:565px"><svg style="left:0;top:0" width="8" height="8" viewBox="0 0 8 8"><path d="M1.200 4l2 2.200 3.800-4.600" fill="none" stroke="#1080dc" stroke-width="1.500"/></svg></div>
<svg style="left:76px;top:562px" width="16" height="17" viewBox="0 0 16 17"><path d="M7.700 0C9.600 0 11.200 1.200 11.200 3.200L11.200 4.600C11.800 4.800 11.900 5.600 11.400 6.200C11.200 7.400 10.600 8.600 10 9.300L10 10.200L15.300 13.300C15.800 13.600 15.900 14 15.900 14.500L15.900 16.300L0 16.300L0 14.500C0 14 .2 13.600 .6 13.300L5.900 10.200L5.900 9.300C5.200 8.600 4.700 7.400 4.500 6.200C4 5.600 4.100 4.800 4.600 4.600L4.600 3.200C4.600 1.200 5.800 0 7.700 0Z" fill="#0899fd"/></svg>
<div class="t tr" id="tr28" style="transform-origin:0 0;transform:scaleX(0.8910);left:97px;top:564px;">DB4</div>
<div class="ex p" style="left:45px;top:586px"></div>
<div class="dh" style="left:55px;top:590px;width:6px"></div>
<div class="cb" style="left:62px;top:585px"><svg style="left:0;top:0" width="8" height="8" viewBox="0 0 8 8"><path d="M1.200 4l2 2.200 3.800-4.600" fill="none" stroke="#1080dc" stroke-width="1.500"/></svg></div>
<svg style="left:76px;top:582px" width="16" height="17" viewBox="0 0 16 17"><path d="M7.700 0C9.600 0 11.200 1.200 11.200 3.200L11.200 4.600C11.800 4.800 11.900 5.600 11.400 6.200C11.200 7.400 10.600 8.600 10 9.300L10 10.200L15.300 13.300C15.800 13.600 15.900 14 15.900 14.500L15.900 16.300L0 16.300L0 14.500C0 14 .2 13.600 .6 13.300L5.900 10.200L5.900 9.300C5.200 8.600 4.700 7.400 4.500 6.200C4 5.600 4.100 4.800 4.600 4.600L4.600 3.200C4.600 1.200 5.800 0 7.700 0Z" fill="#0899fd"/></svg>
<div class="t tr" id="tr29" style="transform-origin:0 0;transform:scaleX(0.8910);left:97px;top:584px;">DB7</div>
<div class="ex p" style="left:45px;top:606px"></div>
<div class="dh" style="left:55px;top:610px;width:6px"></div>
<div class="cb" style="left:62px;top:605px"><svg style="left:0;top:0" width="8" height="8" viewBox="0 0 8 8"><path d="M1.200 4l2 2.200 3.800-4.600" fill="none" stroke="#1080dc" stroke-width="1.500"/></svg></div>
<svg style="left:76px;top:602px" width="16" height="17" viewBox="0 0 16 17"><path d="M7.700 0C9.600 0 11.200 1.200 11.200 3.200L11.200 4.600C11.800 4.800 11.900 5.600 11.400 6.200C11.200 7.400 10.600 8.600 10 9.300L10 10.200L15.300 13.300C15.800 13.600 15.900 14 15.900 14.500L15.900 16.300L0 16.300L0 14.500C0 14 .2 13.600 .6 13.300L5.900 10.200L5.900 9.300C5.200 8.600 4.700 7.400 4.500 6.200C4 5.600 4.100 4.800 4.600 4.600L4.600 3.200C4.600 1.200 5.800 0 7.700 0Z" fill="#0899fd"/></svg>
<div class="t tr" id="tr30" style="transform-origin:0 0;transform:scaleX(0.8910);left:97px;top:604px;">DB9</div>
<div class="ex p" style="left:45px;top:626px"></div>
<div class="dh" style="left:55px;top:630px;width:6px"></div>
<div class="cb" style="left:62px;top:625px"><svg style="left:0;top:0" width="8" height="8" viewBox="0 0 8 8"><path d="M1.200 4l2 2.200 3.800-4.600" fill="none" stroke="#1080dc" stroke-width="1.500"/></svg></div>
<svg style="left:76px;top:622px" width="16" height="17" viewBox="0 0 16 17"><path d="M7.700 0C9.600 0 11.200 1.200 11.200 3.200L11.200 4.600C11.800 4.800 11.900 5.600 11.400 6.200C11.200 7.400 10.600 8.600 10 9.300L10 10.200L15.300 13.300C15.800 13.600 15.900 14 15.900 14.500L15.900 16.300L0 16.300L0 14.500C0 14 .2 13.600 .6 13.300L5.900 10.200L5.900 9.300C5.200 8.600 4.700 7.400 4.500 6.200C4 5.600 4.100 4.800 4.600 4.600L4.600 3.200C4.600 1.200 5.800 0 7.700 0Z" fill="#0899fd"/></svg>
<div class="t tr" id="tr31" style="transform-origin:0 0;transform:scaleX(0.9978);left:97px;top:624px;">donna</div>
<div class="ex p" style="left:45px;top:646px"></div>
<div class="dh" style="left:55px;top:650px;width:6px"></div>
<div class="cb" style="left:62px;top:645px"><svg style="left:0;top:0" width="8" height="8" viewBox="0 0 8 8"><path d="M1.200 4l2 2.200 3.800-4.600" fill="none" stroke="#1080dc" stroke-width="1.500"/></svg></div>
<svg style="left:76px;top:642px" width="16" height="17" viewBox="0 0 16 17"><path d="M7.700 0C9.600 0 11.200 1.200 11.200 3.200L11.200 4.600C11.800 4.800 11.900 5.600 11.400 6.200C11.200 7.400 10.600 8.600 10 9.300L10 10.200L15.300 13.300C15.800 13.600 15.900 14 15.900 14.500L15.900 16.300L0 16.300L0 14.500C0 14 .2 13.600 .6 13.300L5.900 10.200L5.900 9.300C5.200 8.600 4.700 7.400 4.500 6.200C4 5.600 4.100 4.800 4.600 4.600L4.600 3.200C4.600 1.200 5.800 0 7.700 0Z" fill="#0899fd"/></svg>
<div class="t tr" id="tr32" style="transform-origin:0 0;transform:scaleX(0.9582);left:97px;top:644px;">Exported Data.</div>
<div class="ex p" style="left:45px;top:666px"></div>
<div class="dh" style="left:55px;top:670px;width:6px"></div>
<div class="cb" style="left:62px;top:665px"><svg style="left:0;top:0" width="8" height="8" viewBox="0 0 8 8"><path d="M1.200 4l2 2.200 3.800-4.600" fill="none" stroke="#1080dc" stroke-width="1.500"/></svg></div>
<svg style="left:76px;top:662px" width="16" height="17" viewBox="0 0 16 17"><path d="M7.700 0C9.600 0 11.200 1.200 11.200 3.200L11.200 4.600C11.800 4.800 11.900 5.600 11.400 6.200C11.200 7.400 10.600 8.600 10 9.300L10 10.200L15.300 13.300C15.800 13.600 15.900 14 15.900 14.500L15.900 16.300L0 16.300L0 14.500C0 14 .2 13.600 .6 13.300L5.900 10.200L5.900 9.300C5.200 8.600 4.700 7.400 4.500 6.200C4 5.600 4.100 4.800 4.600 4.600L4.600 3.200C4.600 1.200 5.800 0 7.700 0Z" fill="#0899fd"/></svg>
<div class="t tr" id="tr33" style="transform-origin:0 0;transform:scaleX(0.9823);left:97px;top:664px;">HealthMailbox-PC16-john-local</div>
<div class="ex p" style="left:45px;top:686px"></div>
<div class="dh" style="left:55px;top:690px;width:6px"></div>
<div class="cb" style="left:62px;top:685px"><svg style="left:0;top:0" width="8" height="8" viewBox="0 0 8 8"><path d="M1.200 4l2 2.200 3.800-4.600" fill="none" stroke="#1080dc" stroke-width="1.500"/></svg></div>
<svg style="left:76px;top:682px" width="16" height="17" viewBox="0 0 16 17"><path d="M7.700 0C9.600 0 11.200 1.200 11.200 3.200L11.200 4.600C11.800 4.800 11.900 5.600 11.400 6.200C11.200 7.400 10.600 8.600 10 9.300L10 10.200L15.300 13.300C15.800 13.600 15.900 14 15.900 14.500L15.900 16.300L0 16.300L0 14.500C0 14 .2 13.600 .6 13.300L5.900 10.200L5.900 9.300C5.200 8.600 4.700 7.400 4.500 6.200C4 5.600 4.100 4.800 4.600 4.600L4.600 3.200C4.600 1.200 5.800 0 7.700 0Z" fill="#0899fd"/></svg>
<div class="t tr" id="tr34" style="transform-origin:0 0;transform:scaleX(0.9796);left:97px;top:684px;">India</div>
<div class="ex p" style="left:45px;top:706px"></div>
<div class="dh" style="left:55px;top:710px;width:6px"></div>
<div class="cb" style="left:62px;top:705px"><svg style="left:0;top:0" width="8" height="8" viewBox="0 0 8 8"><path d="M1.200 4l2 2.200 3.800-4.600" fill="none" stroke="#1080dc" stroke-width="1.500"/></svg></div>
<svg style="left:76px;top:702px" width="16" height="17" viewBox="0 0 16 17"><path d="M7.700 0C9.600 0 11.200 1.200 11.200 3.200L11.200 4.600C11.800 4.800 11.900 5.600 11.400 6.200C11.200 7.400 10.600 8.600 10 9.300L10 10.200L15.300 13.300C15.800 13.600 15.900 14 15.900 14.500L15.900 16.300L0 16.300L0 14.500C0 14 .2 13.600 .6 13.300L5.900 10.200L5.900 9.300C5.200 8.600 4.700 7.400 4.500 6.200C4 5.600 4.100 4.800 4.600 4.600L4.600 3.200C4.600 1.200 5.800 0 7.700 0Z" fill="#0899fd"/></svg>
<div class="t tr" id="tr35" style="transform-origin:0 0;transform:scaleX(0.9999);left:97px;top:704px;">In-Place Archive - HealthMailbox</div>
<div class="ex p" style="left:45px;top:726px"></div>
<div class="dh" style="left:55px;top:730px;width:6px"></div>
<div class="cb" style="left:62px;top:725px"><svg style="left:0;top:0" width="8" height="8" viewBox="0 0 8 8"><path d="M1.200 4l2 2.200 3.800-4.600" fill="none" stroke="#1080dc" stroke-width="1.500"/></svg></div>
<svg style="left:76px;top:722px" width="16" height="17" viewBox="0 0 16 17"><path d="M7.700 0C9.600 0 11.200 1.200 11.200 3.200L11.200 4.600C11.800 4.800 11.900 5.600 11.400 6.200C11.200 7.400 10.600 8.600 10 9.300L10 10.200L15.300 13.300C15.800 13.600 15.900 14 15.900 14.500L15.900 16.300L0 16.300L0 14.500C0 14 .2 13.600 .6 13.300L5.900 10.200L5.900 9.300C5.200 8.600 4.700 7.400 4.500 6.200C4 5.600 4.100 4.800 4.600 4.600L4.600 3.200C4.600 1.200 5.800 0 7.700 0Z" fill="#0899fd"/></svg>
<div class="t tr" id="tr36" style="transform-origin:0 0;transform:scaleX(0.9995);left:97px;top:724px;">In-Place Archive -Simon</div>
<div class="ex p" style="left:45px;top:746px"></div>
<div class="dh" style="left:55px;top:750px;width:6px"></div>
<div class="cb" style="left:62px;top:745px"><svg style="left:0;top:0" width="8" height="8" viewBox="0 0 8 8"><path d="M1.200 4l2 2.200 3.800-4.600" fill="none" stroke="#1080dc" stroke-width="1.500"/></svg></div>
<svg style="left:76px;top:742px" width="16" height="17" viewBox="0 0 16 17"><path d="M7.700 0C9.600 0 11.200 1.200 11.200 3.200L11.200 4.600C11.800 4.800 11.900 5.600 11.400 6.200C11.200 7.400 10.600 8.600 10 9.300L10 10.200L15.300 13.300C15.800 13.600 15.900 14 15.900 14.500L15.900 16.300L0 16.300L0 14.500C0 14 .2 13.600 .6 13.300L5.900 10.200L5.900 9.300C5.200 8.600 4.700 7.400 4.500 6.200C4 5.600 4.100 4.800 4.600 4.600L4.600 3.200C4.600 1.200 5.800 0 7.700 0Z" fill="#0899fd"/></svg>
<div class="t tr" id="tr37" style="transform-origin:0 0;transform:scaleX(1.0003);left:97px;top:744px;">james Mr.. bond</div>
<div class="ex p" style="left:45px;top:766px"></div>
<div class="dh" style="left:55px;top:770px;width:6px"></div>
<div class="cb" style="left:62px;top:765px"><svg style="left:0;top:0" width="8" height="8" viewBox="0 0 8 8"><path d="M1.200 4l2 2.200 3.800-4.600" fill="none" stroke="#1080dc" stroke-width="1.500"/></svg></div>
<svg style="left:76px;top:762px" width="16" height="17" viewBox="0 0 16 17"><path d="M7.700 0C9.600 0 11.200 1.200 11.200 3.200L11.200 4.600C11.800 4.800 11.900 5.600 11.400 6.200C11.200 7.400 10.600 8.600 10 9.300L10 10.200L15.300 13.300C15.800 13.600 15.900 14 15.900 14.500L15.900 16.300L0 16.300L0 14.500C0 14 .2 13.600 .6 13.300L5.900 10.200L5.900 9.300C5.200 8.600 4.700 7.400 4.500 6.200C4 5.600 4.100 4.800 4.600 4.600L4.600 3.200C4.600 1.200 5.800 0 7.700 0Z" fill="#0899fd"/></svg>
<div class="t tr" id="tr38" style="transform-origin:0 0;transform:scaleX(1.0210);left:97px;top:764px;">jonthan</div>
</div>
<div class="a" style="left:233px;top:181px;width:16px;height:781px;background:#f0f0f0"></div>
<div class="a" style="left:233px;top:198px;width:15px;height:548px;background:#c9c9c9"></div>
<svg style="left:236px;top:186px" width="9" height="6" viewBox="0 0 9 6"><path d="M0.700 5.300l3.800-3.800 3.800 3.800" fill="none" stroke="#505050" stroke-width="1.700"/></svg>
<svg style="left:236px;top:950px" width="9" height="6" viewBox="0 0 9 6"><path d="M0.700 0.700l3.800 3.800 3.800-3.800" fill="none" stroke="#505050" stroke-width="1.700"/></svg>
<div class="a" style="left:1px;top:962px;width:232px;height:16px;background:#f0f0f0"></div>
<div class="a" style="left:233px;top:962px;width:17px;height:16px;background:#f0f0f0"></div>
<div class="a" style="left:18px;top:963px;width:136px;height:14px;background:#c9c9c9"></div>
<svg style="left:6px;top:965px" width="6" height="9" viewBox="0 0 6 9"><path d="M5.300 0.700l-3.800 3.800 3.800 3.800" fill="none" stroke="#505050" stroke-width="1.700"/></svg>
<svg style="left:221px;top:965px" width="6" height="9" viewBox="0 0 6 9"><path d="M0.700 0.700l3.800 3.800-3.800 3.800" fill="none" stroke="#505050" stroke-width="1.700"/></svg>
<div class="a" style="left:250px;top:962px;width:7px;height:54px;background:#e6e6e6"></div>
<div class="a" style="left:0;top:978px;width:257px;height:1px;background:#d6d6d6"></div>
<div class="a" style="left:0;top:979px;width:250px;height:37px;background:#f0f0f0"></div>
<div class="a" style="left:2px;top:980px;width:34px;height:34px;background:#c9c9c9"></div>
<svg style="left:11px;top:990px" width="16" height="14" viewBox="0 0 16 14"><rect width="16" height="13.700" fill="#0563c1"/><path d="M0 .3l8 7.500 8-7.500" fill="none" stroke="#fff" stroke-width="1.200"/></svg>
<svg style="left:48px;top:991px" width="15" height="13" viewBox="0 0 15 13"><rect width="14.100" height="2.700" y="0" fill="#0563c1"/><g fill="#0563c1"><rect x="0.00" y="4.2" width="2" height="1.800"/><rect x="3.03" y="4.2" width="2" height="1.800"/><rect x="6.06" y="4.2" width="2" height="1.800"/><rect x="9.09" y="4.2" width="2" height="1.800"/><rect x="12.12" y="4.2" width="2" height="1.800"/><rect x="0.00" y="7.2" width="2" height="1.800"/><rect x="3.03" y="7.2" width="2" height="1.800"/><rect x="6.06" y="7.2" width="2" height="1.800"/><rect x="9.09" y="7.2" width="2" height="1.800"/><rect x="12.12" y="7.2" width="2" height="1.800"/><rect x="0.00" y="10.3" width="2" height="1.800"/><rect x="3.03" y="10.3" width="2" height="1.800"/><rect x="6.06" y="10.3" width="2" height="1.800"/><rect x="9.09" y="10.3" width="2" height="1.800"/><rect x="12.12" y="10.3" width="2" height="1.800"/></g></svg>
<svg style="left:83px;top:989px" width="17" height="16" viewBox="0 0 17 16"><g fill="#0563c1"><circle cx="11" cy="2.900" r="2.900"/><path d="M8.800 12.800c-.6-3.800 .6-6.200 3.200-6.200c2.500 0 4.200 1.800 4.200 3.800c0 1.700-1.300 2.700-3.500 2.700z"/><circle cx="4.900" cy="5.600" r="3.300" fill="#f0f0f0"/><circle cx="4.900" cy="5.600" r="2.800"/><path d="M-.5 15.300c0-4.500 2-6.300 5.400-6.300s5.600 1.800 5.600 6.300z" fill="#f0f0f0"/><path d="M0 14.800c0-3.800 1.800-5.300 4.900-5.300s5.100 1.500 5.100 5.300z"/></g><path d="M3.900 9.700l1 1.700 1-1.700z" fill="#f0f0f0"/></svg>
<svg style="left:120px;top:989px" width="14" height="17" viewBox="0 0 14 17"><path d="M0.700 2.700v12.300h12V2.700" fill="none" stroke="#0563c1" stroke-width="1.400"/><path d="M0 15.200h13.400" stroke="#0563c1" stroke-width="1.600"/><path d="M.7 2.700h2.500M10.200 2.700h2.500" stroke="#0563c1" stroke-width="1.300"/><path d="M3.200 4.700l3.400-3.800 3.400 3.800z" fill="#0563c1"/><path d="M3.300 8.900l2.300 2.500 4.100-4.700" fill="none" stroke="#0563c1" stroke-width="1.400"/></svg>
<svg style="left:156px;top:990px" width="15" height="15" viewBox="0 0 15 15"><path d="M0 0.200h14v13.500h-9.300v-3.500h-4.700z" fill="#0563c1"/><path d="M.3 10.800h3.900v2.900z" fill="#0563c1"/></svg>
<svg style="left:188px;top:995px" width="22" height="5" viewBox="0 0 22 5"><g fill="#333"><circle cx="2.500" cy="2.500" r="1.900"/><circle cx="10.700" cy="2.500" r="1.900"/><circle cx="18.900" cy="2.500" r="1.900"/></g></svg>
<!-- GRID -->
<div class="a" style="left:257px;top:146px;width:1067px;height:870px;background:#fdfdfd"></div>
<div class="a" style="left:256px;top:145px;width:1069px;height:1px;background:#e0e0e0"></div>
<div class="a" style="left:258px;top:147px;width:1065px;height:20px;background:#e6e6e6"></div>
<div class="a" style="left:258px;top:167px;width:1065px;height:1px;background:#8e8e8e"></div>
<div class="a" style="left:300px;top:148px;width:1px;height:19px;background:#c4c4c4"></div>
<div class="a" style="left:300px;top:168px;width:1px;height:87px;background:#d8d8d8"></div>
<div class="a" style="left:325px;top:148px;width:1px;height:19px;background:#c4c4c4"></div>
<div class="a" style="left:325px;top:168px;width:1px;height:87px;background:#d8d8d8"></div>
<div class="a" style="left:578px;top:148px;width:1px;height:19px;background:#c4c4c4"></div>
<div class="a" style="left:578px;top:168px;width:1px;height:87px;background:#d8d8d8"></div>
<div class="a" style="left:831px;top:148px;width:1px;height:19px;background:#c4c4c4"></div>
<div class="a" style="left:831px;top:168px;width:1px;height:87px;background:#d8d8d8"></div>
<div class="a" style="left:1084px;top:148px;width:1px;height:19px;background:#c4c4c4"></div>
<div class="a" style="left:1084px;top:168px;width:1px;height:87px;background:#d8d8d8"></div>
<div class="t g" style="transform-origin:0 0;transform:scaleX(0.9458);left:331px;top:152.500px" id="h0">Da</div>
<div class="t g" style="transform-origin:0 0;transform:scaleX(0.9123);left:584px;top:152.500px" id="h1">A</div>
<div class="t g" style="transform-origin:0 0;transform:scaleX(0.9535);left:837px;top:152.500px" id="h2">Soggetto</div>
<div class="t g" style="transform-origin:0 0;transform:scaleX(0.9591);left:1090px;top:152.500px" id="h3">Data</div>
<svg style="left:283px;top:150.500px" width="7" height="12" viewBox="0 0 7 12"><path d="M1 4v4.800a2.400 2.400 0 0 0 4.800 0V2.800a1.900 1.900 0 0 0-3.800 0v5.200" fill="none" stroke="#3a3a3a" stroke-width="1.100"/><path d="M1.300 8.500a2 1.500 0 0 1 4.200 0" fill="none" stroke="#3a3a3a" stroke-width=".9"/></svg>
<svg style="left:305px;top:151px" width="11" height="12" viewBox="0 0 11 12"><g fill="none" stroke="#3a3a3a" stroke-width="1"><path d="M1.500 3v8.500h8V3"/><path d="M0 2.500h11M3.500 2.500v-2h4v2"/><path d="M3.700 4.500v5.500M5.500 4.500v5.500M7.300 4.500v5.500"/></g></svg>
<div class="a" style="left:258px;top:168px;width:1065px;height:18px;background:#fff"></div>
<div class="a" style="left:300px;top:168px;width:1px;height:18px;background:#d0d0d0"></div>
<div class="a" style="left:325px;top:168px;width:1px;height:18px;background:#d0d0d0"></div>
<div class="a" style="left:578px;top:168px;width:1px;height:18px;background:#d0d0d0"></div>
<div class="a" style="left:831px;top:168px;width:1px;height:18px;background:#d0d0d0"></div>
<div class="a" style="left:1084px;top:168px;width:1px;height:18px;background:#d0d0d0"></div>
<div class="a" style="left:258px;top:186px;width:1065px;height:1px;background:#dcdcdc"></div>
<svg style="left:561.5px;top:170px" width="13" height="12" viewBox="0 0 13 12"><circle cx="8" cy="4.700" r="3.600" fill="#fff" stroke="#2e6fb5" stroke-width="1.300"/><path d="M5.300 7.500l-4.300 3.700" stroke="#2e6fb5" stroke-width="2"/></svg>
<svg style="left:814.5px;top:170px" width="13" height="12" viewBox="0 0 13 12"><circle cx="8" cy="4.700" r="3.600" fill="#fff" stroke="#2e6fb5" stroke-width="1.300"/><path d="M5.300 7.500l-4.300 3.700" stroke="#2e6fb5" stroke-width="2"/></svg>
<svg style="left:1067.5px;top:170px" width="13" height="12" viewBox="0 0 13 12"><circle cx="8" cy="4.700" r="3.600" fill="#fff" stroke="#2e6fb5" stroke-width="1.300"/><path d="M5.300 7.500l-4.300 3.700" stroke="#2e6fb5" stroke-width="2"/></svg>
<svg style="left:1306.5px;top:170px" width="13" height="12" viewBox="0 0 13 12"><circle cx="8" cy="4.700" r="3.600" fill="#fff" stroke="#2e6fb5" stroke-width="1.300"/><path d="M5.300 7.500l-4.300 3.700" stroke="#2e6fb5" stroke-width="2"/></svg>
<div class="a" style="left:275px;top:187px;width:1048px;height:17px;background:#cfcfcf"></div>
<div class="a" style="left:275px;top:204px;width:1048px;height:17px;background:#f1f1f1"></div>
<div class="a" style="left:275px;top:221px;width:1048px;height:17px;background:#fdfdfd"></div>
<div class="a" style="left:275px;top:238px;width:1048px;height:17px;background:#f1f1f1"></div>
<div class="a" style="left:275px;top:204px;width:1048px;height:1px;background:#d0d0d0"></div>
<div class="t g" style="transform-origin:0 0;transform:scaleX(0.9260);left:329px;top:191px" id="r0c0">Administrator</div>
<div class="t g" style="transform-origin:0 0;transform:scaleX(0.9571);left:582px;top:191px" id="r0c1">Онлине</div>
<div class="t g" style="transform-origin:0 0;transform:scaleX(0.9571);left:835px;top:191px" id="r0c2">Онлине</div>
<div class="t g" style="transform-origin:0 0;transform:scaleX(1.0143);left:1088px;top:191px" id="r0c3">7/17/2018 3:58 PM</div>
<div class="a" style="left:275px;top:221px;width:1048px;height:1px;background:#d0d0d0"></div>
<div class="t g" style="transform-origin:0 0;transform:scaleX(0.9260);left:329px;top:208px" id="r1c0">Administrator</div>
<div class="t g" style="transform-origin:0 0;transform:scaleX(0.9347);left:582px;top:208px" id="r1c1">Aa1</div>
<div class="t g" style="transform-origin:0 0;transform:scaleX(1.0173);left:835px;top:208px" id="r1c2">године</div>
<div class="t g" style="transform-origin:0 0;transform:scaleX(1.0143);left:1088px;top:208px" id="r1c3">7/17/2018 3:39 PM</div>
<div class="a" style="left:275px;top:238px;width:1048px;height:1px;background:#d0d0d0"></div>
<div class="t g" style="transform-origin:0 0;transform:scaleX(0.9260);left:329px;top:225px" id="r2c0">Administrator</div>
<div class="t g" style="transform-origin:0 0;transform:scaleX(0.9347);left:582px;top:225px" id="r2c1">Aa1</div>
<div class="t g" style="transform-origin:0 0;transform:scaleX(0.9735);left:835px;top:225px" id="r2c2">Онлине од</div>
<div class="t g" style="transform-origin:0 0;transform:scaleX(1.0143);left:1088px;top:225px" id="r2c3">7/17/2018 3:38 PM</div>
<div class="a" style="left:275px;top:255px;width:1048px;height:1px;background:#d0d0d0"></div>
<div class="t g" style="transform-origin:0 0;transform:scaleX(0.9260);left:329px;top:242px" id="r3c0">Administrator</div>
<div class="t g" style="transform-origin:0 0;transform:scaleX(0.9571);left:582px;top:242px" id="r3c1">Онлине</div>
<div class="t g" style="transform-origin:0 0;transform:scaleX(1.0173);left:835px;top:242px" id="r3c2">године</div>
<div class="t g" style="transform-origin:0 0;transform:scaleX(1.0143);left:1088px;top:242px" id="r3c3">7/17/2018 3:57 PM</div>
<div class="a" style="left:300px;top:187px;width:1px;height:68px;background:rgba(120,120,120,.18)"></div>
<div class="a" style="left:325px;top:187px;width:1px;height:68px;background:rgba(120,120,120,.18)"></div>
<div class="a" style="left:578px;top:187px;width:1px;height:68px;background:rgba(120,120,120,.18)"></div>
<div class="a" style="left:831px;top:187px;width:1px;height:68px;background:rgba(120,120,120,.18)"></div>
<div class="a" style="left:1084px;top:187px;width:1px;height:68px;background:rgba(120,120,120,.18)"></div>
<div class="a" style="left:258px;top:187px;width:16px;height:68px;background:#f3f3f3"></div>
<div class="a" style="left:274px;top:187px;width:1px;height:68px;background:#8e8e8e"></div>
<svg style="left:264px;top:191px" width="6" height="10" viewBox="0 0 6 10"><path d="M0.500 0.500v9l5-4.500z" fill="#6a6a6a"/></svg>
<div class="a" style="left:258px;top:997px;width:1065px;height:17px;background:#f0f0f0;border:1px solid #d6d6d6"></div>
<div class="a" style="left:258px;top:997px;width:18px;height:17px;background:#fdfdfd;border:1px solid #bdbdbd"></div>
<div class="a" style="left:275px;top:997px;width:1014px;height:17px;background:#fdfdfd;border:1px solid #bdbdbd"></div>
<div class="a" style="left:1306px;top:997px;width:17px;height:17px;background:#fdfdfd;border:1px solid #bdbdbd"></div>
<svg style="left:264px;top:1001px" width="6" height="9" viewBox="0 0 6 9"><path d="M5.500 0v9l-5.500-4.500z" fill="#555"/></svg>
<svg style="left:1312px;top:1001px" width="6" height="9" viewBox="0 0 6 9"><path d="M0.500 0v9l5.500-4.500z" fill="#555"/></svg>
<div class="a" style="left:1324px;top:145px;width:7px;height:871px;background:#e4e4e4"></div>
<div class="a" style="left:1325px;top:145px;width:5px;height:871px;background:#dadada"></div>
<!-- PREVIEW -->
<div class="a" style="left:1330px;top:145px;width:590px;height:34px;background:#e6e6e6"></div>
<div class="a" style="left:1331px;top:179px;width:578px;height:170px;background:#f1f1f1"></div>
<div class="a" style="left:1909px;top:179px;width:11px;height:837px;background:#fff"></div>
<div class="t ui" style="transform-origin:0 0;transform:scaleX(1.0604);left:1335px;top:154px;font-size:18px;color:#444;transform-origin:0 0" id="ante">Anteprima</div>
<svg style="left:1866px;top:157px" width="50" height="12" viewBox="0 0 50 12"><path d="M0 4h9l-4.500 4.500z" fill="#555"/><g stroke="#555" fill="none" stroke-width="1"><path d="M22.500 1.500h3v4.500h-3zM21 6.500h6M24 6.500v4"/><path d="M25 1.500v4.500" stroke-width="1.500"/></g><path d="M39.500 1.500l7 7M46.500 1.500l-7 7" stroke="#555" stroke-width="1.300"/></svg>
<div class="t g" style="transform-origin:0 0;transform:scaleX(0.9316);left:1345px;top:186.5px" id="pk0">Da</div>
<div class="t g" style="transform-origin:0 0;transform:scaleX(0.9260);left:1451px;top:186.5px" id="pv0">Administrator</div>
<div class="t g" style="transform-origin:0 0;transform:scaleX(0.9396);left:1345px;top:214.0px" id="pk1">A</div>
<div class="t g" style="transform-origin:0 0;transform:scaleX(0.9520);left:1451px;top:214.0px" id="pv1">Онлине</div>
<div class="t g" style="transform-origin:0 0;transform:scaleX(0.9581);left:1345px;top:241.5px" id="pk2">Soggetto</div>
<div class="t g" style="transform-origin:0 0;transform:scaleX(0.9520);left:1451px;top:241.5px" id="pv2">Онлине</div>
<div class="t g" style="transform-origin:0 0;transform:scaleX(1.0162);left:1451px;top:269.0px" id="pv3">7/17/2018 3:58:37 PM</div>
<div class="a" style="left:1332px;top:348px;width:577px;height:2px;background:#777"></div>
<div class="a" style="left:1332px;top:350px;width:577px;height:666px;background:#fff"></div>
<div class="a" style="left:1331px;top:348px;width:2px;height:656px;background:#6a6a6a"></div>
<div class="a" style="left:1891px;top:350px;width:17px;height:637px;background:#f8f8f8"></div>
<svg style="left:1893px;top:366px" width="12" height="8" viewBox="0 0 12 8"><path d="M1 7l5-5 5 5" fill="none" stroke="#c4c4c4" stroke-width="2"/></svg>
<svg style="left:1893px;top:961px" width="12" height="8" viewBox="0 0 12 8"><path d="M1 1l5 5 5-5" fill="none" stroke="#c4c4c4" stroke-width="2"/></svg>
<div class="a" style="left:1333px;top:987px;width:576px;height:17px;background:#f0f0f0"></div>
<div class="a" style="left:1367px;top:988px;width:172px;height:15px;background:#cdcdcd"></div>
<svg style="left:1350px;top:990px" width="8" height="11" viewBox="0 0 8 11"><path d="M7 1l-5 4.500 5 4.500" fill="none" stroke="#505050" stroke-width="2"/></svg>
<svg style="left:1865px;top:990px" width="8" height="11" viewBox="0 0 8 11"><path d="M1 1l5 4.500-5 4.500" fill="none" stroke="#505050" stroke-width="2"/></svg>
<div class="a" style="left:1908px;top:350px;width:1px;height:654px;background:#e2e2e2"></div>
<div class="a" style="left:1333px;top:350px;width:558px;height:637px;overflow:hidden" id="body">
<div class="t mono" style="left:110.800px;top:74px">1999. године, овај српско-енглески речник описује</div>
<div class="t mono" style="left:110.800px;top:110px">1999. године, овај српско-енглески речник описује</div>
<div class="t mono" style="left:110.800px;top:146px">1999. године, овај српско-енглески речник описује</div>
<div class="t mono" style="left:110.800px;top:182px">1999. године, овај српско-енглески речник описује</div>
<div class="t mono" style="left:110.800px;top:218px">1999. године, овај српско-енглески речник описује</div>
<div class="t mono" style="left:110.800px;top:236px">користи за превођење са енглеског на српски и за</div>
<div class="t mono" style="left:10.800px;top:410px">ик се користи за превођење са енглеског на српски и за превођење</div>
<div class="t mono" style="left:10.800px;top:428px">ник се користи за превођење са енглеског на српски и за превођење</div>
<div class="t mono" style="left:10.800px;top:446px">чник се користи за превођење са енглеског на српски и за превођење</div>
<div class="t mono" style="left:10.800px;top:464px">к се користи за превођење са енглеског на српски и за превођење</div>
</div>
<!-- STATUS -->
<div class="a" style="left:0;top:1015px;width:1920px;height:2px;background:linear-gradient(#dedede,#d2d2d2)"></div>
<div class="a" style="left:0;top:1017px;width:1920px;height:22px;background:#f1f1f1"></div>
<div class="t ui" style="transform-origin:0 0;transform:scaleX(1.0031);left:2px;top:1023px;font-size:11px;color:#444" id="stat">Elementi: 4</div>
<!-- DIALOG -->
<div class="a" id="dlg" style="left:482px;top:250px;width:957px;height:540px;background:#f1f1f1;border:1px solid #1a68c8;box-shadow:0 1px 8px rgba(0,0,0,.28)"></div>
<div class="a" style="left:483px;top:251px;width:955px;height:30px;background:#2b579a"></div>
<div class="t d" style="transform-origin:0 0;transform:scaleX(0.9190);left:494px;top:264px;color:#fff" id="dt">Salva</div>
<svg style="left:1416px;top:258px" width="8" height="8" viewBox="0 0 8 8"><path d="M0.800 0.800l6.400 6.400M7.200 .8l-6.400 6.400" stroke="#fff" stroke-width="1.500"/></svg>
<div class="t d" style="transform-origin:0 0;transform:scaleX(0.9584);left:501px;top:296px" id="dmsg">Visualizza e gestisci le caselle di posta da salvare in coda.</div>
<div class="a" style="left:490px;top:322px;width:941px;height:355px;background:#fdfdfd;border:1px solid #d4d4d4"></div>
<div class="a" style="left:492px;top:324px;width:937px;height:32px;background:#e6e6e6"></div>
<div class="a" style="left:492px;top:356px;width:937px;height:1px;background:#a0a0a0"></div>
<div class="a" style="left:1299px;top:324px;width:76px;height:32px;background:#cdcdcd;border:1px solid #a8a8a8;border-bottom:none"></div>
<div class="a" style="left:638px;top:325px;width:1px;height:31px;background:#b4b4b4"></div>
<div class="a" style="left:639px;top:325px;width:1px;height:31px;background:#f4f4f4"></div>
<div class="a" style="left:784px;top:325px;width:1px;height:31px;background:#b4b4b4"></div>
<div class="a" style="left:785px;top:325px;width:1px;height:31px;background:#f4f4f4"></div>
<div class="a" style="left:885px;top:325px;width:1px;height:31px;background:#b4b4b4"></div>
<div class="a" style="left:886px;top:325px;width:1px;height:31px;background:#f4f4f4"></div>
<div class="a" style="left:1036px;top:325px;width:1px;height:31px;background:#b4b4b4"></div>
<div class="a" style="left:1037px;top:325px;width:1px;height:31px;background:#f4f4f4"></div>
<div class="a" style="left:1162px;top:325px;width:1px;height:31px;background:#b4b4b4"></div>
<div class="a" style="left:1163px;top:325px;width:1px;height:31px;background:#f4f4f4"></div>
<div class="a" style="left:1298px;top:325px;width:1px;height:31px;background:#b4b4b4"></div>
<div class="a" style="left:1299px;top:325px;width:1px;height:31px;background:#f4f4f4"></div>
<div class="a" style="left:1374px;top:325px;width:1px;height:31px;background:#b4b4b4"></div>
<div class="a" style="left:1375px;top:325px;width:1px;height:31px;background:#f4f4f4"></div>
<div class="t d" style="transform-origin:0 0;transform:scaleX(0.9508);left:503px;top:335.500px" id="dh0">Nome della Casella di po...</div>
<div class="t d" style="transform-origin:0 0;transform:scaleX(0.9508);left:648px;top:335.500px" id="dh1">Casella di posta di destin...</div>
<div class="t d" style="transform-origin:0 0;transform:scaleX(0.9343);left:795px;top:335.500px" id="dh2">Stato</div>
<div class="t d" style="transform-origin:0 0;transform:scaleX(0.9599);left:896px;top:335.500px" id="dh3">Recupero della cartella</div>
<div class="t d" style="transform-origin:0 0;transform:scaleX(0.9653);left:1047px;top:335.500px" id="dh4">Totale elementi elab...</div>
<div class="t d" style="transform-origin:0 0;transform:scaleX(0.9588);left:1173px;top:335.500px" id="dh5">Percentuale</div>
<div class="t d" style="transform-origin:0 0;transform:scaleX(0.8910);left:501px;top:366.5px" id="d0c0">Aa</div>
<div class="t d" style="transform-origin:0 0;transform:scaleX(0.9850);left:650px;top:367.0px" id="d0c1">test1@SOFTWAREVISI...</div>
<div class="t d" style="transform-origin:0 0;transform:scaleX(0.9459);left:793px;top:366.5px;color:#1e84e4" id="d0c2">Elaborazione in ...</div>
<div class="t d" style="transform-origin:0 0;transform:scaleX(0.9398);left:894px;top:366.5px" id="d0c3">Inbox</div>
<div class="t d" style="transform-origin:0 0;transform:scaleX(0.9306);left:1045px;top:366.5px" id="d0c4">0</div>
<div class="t d" style="transform-origin:0 0;transform:scaleX(0.9078);left:1165px;top:366.5px" id="d0c5">47%</div>
<div class="a" style="left:1193px;top:361px;width:101px;height:21px;background:#fff;border:1px solid #555"></div>
<div class="a" style="left:1195px;top:363px;width:44.8px;height:17px;background:#2b579a"></div>
<div class="a" style="left:1310px;top:365.0px;width:39px;height:13px;background:#e4e4e4"></div>
<div class="t d" style="transform-origin:0 0;transform:scaleX(0.9008);left:1313px;top:365.5px;color:#fdfbf8" id="d0c6">Elimina</div>
<div class="a" style="left:492px;top:387px;width:882px;height:28px;background:#f1f1f1"></div>
<div class="a" style="left:638px;top:387px;width:2px;height:28px;background:linear-gradient(90deg,#fdfdfd 50%,rgba(253,253,253,.4) 50%)"></div>
<div class="a" style="left:784px;top:387px;width:2px;height:28px;background:linear-gradient(90deg,#fdfdfd 50%,rgba(253,253,253,.4) 50%)"></div>
<div class="a" style="left:885px;top:387px;width:2px;height:28px;background:linear-gradient(90deg,#fdfdfd 50%,rgba(253,253,253,.4) 50%)"></div>
<div class="a" style="left:1036px;top:387px;width:2px;height:28px;background:linear-gradient(90deg,#fdfdfd 50%,rgba(253,253,253,.4) 50%)"></div>
<div class="a" style="left:1162px;top:387px;width:2px;height:28px;background:linear-gradient(90deg,#fdfdfd 50%,rgba(253,253,253,.4) 50%)"></div>
<div class="a" style="left:1298px;top:387px;width:2px;height:28px;background:linear-gradient(90deg,#fdfdfd 50%,rgba(253,253,253,.4) 50%)"></div>
<div class="t d" style="transform-origin:0 0;transform:scaleX(0.9551);left:501px;top:395.5px" id="d1c0">Aa1</div>
<div class="t d" style="transform-origin:0 0;transform:scaleX(0.9850);left:650px;top:396.0px" id="d1c1">test3@SOFTWAREVISI...</div>
<div class="t d" style="transform-origin:0 0;transform:scaleX(0.9459);left:793px;top:395.5px;color:#1e84e4" id="d1c2">Elaborazione in ...</div>
<div class="t d" style="transform-origin:0 0;transform:scaleX(0.9878);left:894px;top:395.5px" id="d1c3">Unknown</div>
<div class="t d" style="transform-origin:0 0;transform:scaleX(0.9306);left:1045px;top:395.5px" id="d1c4">0</div>
<div class="t d" style="transform-origin:0 0;transform:scaleX(0.9078);left:1165px;top:395.5px" id="d1c5">80%</div>
<div class="a" style="left:1193px;top:390px;width:101px;height:21px;background:#f1f1f1;border:1px solid #555"></div>
<div class="a" style="left:1195px;top:392px;width:76.8px;height:17px;background:#2b579a"></div>
<div class="a" style="left:1310px;top:394.0px;width:39px;height:13px;background:#e4e4e4"></div>
<div class="t d" style="transform-origin:0 0;transform:scaleX(0.9008);left:1313px;top:394.5px;color:#fdfbf8" id="d1c6">Elimina</div>
<div class="a" style="left:1299px;top:416px;width:75px;height:28px;background:#cdcdcd"></div>
<div class="t d" style="transform-origin:0 0;transform:scaleX(0.9551);left:501px;top:424.5px" id="d2c0">Ab1</div>
<div class="t d" style="transform-origin:0 0;transform:scaleX(0.9850);left:650px;top:425.0px" id="d2c1">test4@SOFTWAREVISI...</div>
<div class="t d" style="transform-origin:0 0;transform:scaleX(0.9172);left:793px;top:424.5px;color:#f23c4c" id="d2c2">Eliminato!</div>
<div class="t d" style="transform-origin:0 0;transform:scaleX(0.9306);left:1045px;top:424.5px" id="d2c4">0</div>
<div class="t d" style="transform-origin:0 0;transform:scaleX(0.8676);left:1165px;top:424.5px" id="d2c5">0%</div>
<div class="a" style="left:1193px;top:419px;width:101px;height:21px;background:#fff;border:1px solid #555"></div>
<div class="a" style="left:1310px;top:423.0px;width:39px;height:13px;background:#dcdcdc"></div>
<div class="t d" style="transform-origin:0 0;transform:scaleX(0.9008);left:1313px;top:423.5px;color:#fdfbf8" id="d2c6">Elimina</div>
<div class="t d" style="transform-origin:0 0;transform:scaleX(0.9601);left:500px;top:719px" id="df0">Caselle di posta salvate: 0</div>
<div class="t d" style="transform-origin:0 0;transform:scaleX(0.9574);left:500px;top:732px" id="df1">Caselle di posta abortite: 0</div>
<div class="t d" style="transform-origin:0 0;transform:scaleX(0.9449);left:500px;top:745px" id="df2">Caselle di posta eliminate: 1</div>
<div class="t d" style="transform-origin:0 0;transform:scaleX(0.9585);left:500px;top:758px" id="df3">Caselle di posta non riuscite: 0</div>
<div class="a" style="left:1333px;top:749px;width:87px;height:23px;background:#fdfdfd;border:1px solid #adadad"></div>
<div class="t d" style="transform-origin:0 0;transform:scaleX(0.9244);left:1343px;top:756px" id="dbtn">Interrompi tutti</div>
</body></html>
